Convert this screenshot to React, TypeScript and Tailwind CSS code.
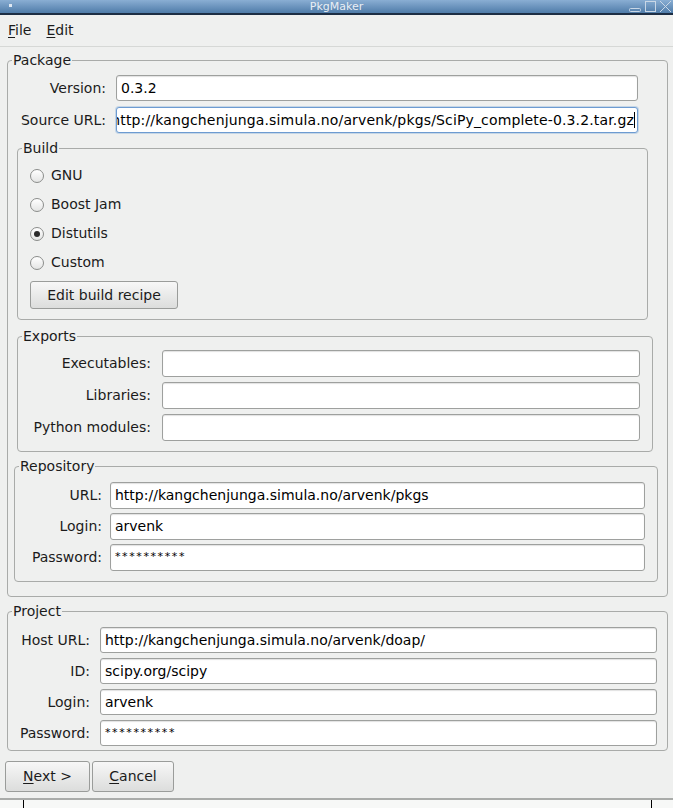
import React from "react";

type GroupProps = {
  title: string;
  className: string;
  bodyClassName: string;
  children: React.ReactNode;
};

function GroupBox({ title, className, bodyClassName, children }: GroupProps) {
  return (
    <fieldset className={`border border-[#a9aba9] rounded-[4px] ${className}`}>
      <legend className="ml-[4px] px-[1px] leading-[17px] text-[14px] text-[#1b1b1b]">
        {title}
      </legend>
      <div className={bodyClassName}>{children}</div>
    </fieldset>
  );
}

type RowProps = {
  label: string;
  value?: string;
  labelClass: string;
  inputClass: string;
  password?: boolean;
};

function Row({ label, value, labelClass, inputClass, password }: RowProps) {
  return (
    <div className="flex items-center">
      <span className={`text-right shrink-0 text-[14px] text-[#1b1b1b] ${labelClass}`}>
        {label}
      </span>
      <div
        className={`flex items-center bg-white border border-[#9ea09e] rounded-[3px] shadow-[inset_0_1px_1px_rgba(0,0,0,0.12)] px-[4px] overflow-hidden whitespace-nowrap ${inputClass}`}
      >
        {password ? (
          <span className="text-[11px] tracking-[1.6px] text-black">{value}</span>
        ) : (
          <span className="text-[14px] text-black">{value}</span>
        )}
      </div>
    </div>
  );
}

function Radio({ label, checked }: { label: string; checked?: boolean }) {
  return (
    <div className="h-[29px] flex items-center pl-[12px]">
      <span className="w-[14px] h-[14px] rounded-full border border-[#8b8d8b] bg-linear-to-b from-white to-[#e4e5e4] flex items-center justify-center">
        {checked && <span className="w-[6px] h-[6px] rounded-full bg-[#2a2a2a]" />}
      </span>
      <span className="ml-[7px] text-[14px] text-[#1b1b1b]">{label}</span>
    </div>
  );
}

function Button({ children, className }: { children: React.ReactNode; className: string }) {
  return (
    <button
      className={`flex items-center justify-center border border-[#9a9c9a] rounded-[3px] bg-linear-to-b from-[#f7f7f7] to-[#dcdddc] text-[14px] text-[#1b1b1b] ${className}`}
    >
      {children}
    </button>
  );
}

export default function App() {
  const pkgLabel = "w-[98px]";
  const pkgInput = "ml-[10px] w-[522px] h-[26px]";
  const expLabel = "w-[133px]";
  const expInput = "ml-[11px] w-[478px] h-[27px]";
  const repoLabel = "w-[87px]";
  const repoInput = "ml-[8px] w-[535px] h-[27px]";
  const projLabel = "w-[82px]";
  const projInput = "ml-[10px] w-[557px] h-[26px]";

  return (
    <div className="w-[673px] h-[808px] overflow-hidden bg-[#eff0ef] font-['DejaVu_Sans',sans-serif] flex flex-col">
      {/* title bar */}
      <div className="relative h-[15px] shrink-0 bg-linear-to-b from-[#8aaed3] to-[#4f7ca9] border-b-[2px] border-[#1d2e44] flex items-center justify-center">
        <span className="absolute left-[9px] top-[4px] w-[3px] h-[3px] bg-[#dfe8f2]" />
        <span className="text-[11px] leading-[13px] text-[#e9eef4]">PkgMaker</span>
        <svg className="absolute right-0 top-0" width="46" height="13" viewBox="0 0 46 13">
          <rect x="2.5" y="8.5" width="11" height="3" rx="1" fill="none" stroke="#c9d7e6" />
          <rect x="18.5" y="1.5" width="10" height="10" fill="none" stroke="#c9d7e6" />
          <path d="M33 1 L44 12 M44 1 L33 12" stroke="#c9d7e6" strokeWidth="1" />
        </svg>
      </div>

      {/* menu bar */}
      <div className="h-[32px] shrink-0 flex items-center pl-[8px] gap-[15px] text-[14px] text-[#1b1b1b] border-b border-[#d6d8d6]">
        <span>
          <span className="underline underline-offset-2">F</span>ile
        </span>
        <span>
          <span className="underline underline-offset-2">E</span>dit
        </span>
      </div>

      <div className="pl-[7px] pr-[6px] pt-[5px] flex flex-col">
        <GroupBox title="Package" className="w-[661px]" bodyClassName="pt-[6px] pb-[14px] flex flex-col">
          <div className="flex flex-col gap-[6px]">
            <Row label="Version:" value="0.3.2" labelClass={pkgLabel} inputClass={pkgInput} />
            <div className="flex items-center">
              <span className={`text-right shrink-0 text-[14px] text-[#1b1b1b] ${pkgLabel}`}>Source URL:</span>
              <div className="ml-[10px] w-[522px] h-[26px] flex items-center justify-end bg-white border border-[#6d9bd1] rounded-[3px] shadow-[0_0_0_1px_rgba(120,165,215,0.35)] pr-[2px] overflow-hidden whitespace-nowrap">
                <span className="text-[14px] tracking-[0.15px] text-black">
                  http://kangchenjunga.simula.no/arvenk/pkgs/SciPy_complete-0.3.2.tar.gz
                </span>
                <span className="w-[1px] h-[16px] bg-black shrink-0" />
              </div>
            </div>
          </div>

          <GroupBox title="Build" className="mt-[7px] ml-[9px] w-[631px]" bodyClassName="pt-[4px] pb-[10px] flex flex-col">
            <Radio label="GNU" />
            <Radio label="Boost Jam" />
            <Radio label="Distutils" checked />
            <Radio label="Custom" />
            <Button className="mt-[4px] ml-[12px] w-[148px] h-[28px]">Edit build recipe</Button>
          </GroupBox>

          <GroupBox title="Exports" className="mt-[8px] ml-[9px] w-[636px]" bodyClassName="pt-[5px] pb-[10px] flex flex-col gap-[5px]">
            <Row label="Executables:" labelClass={expLabel} inputClass={expInput} />
            <Row label="Libraries:" labelClass={expLabel} inputClass={expInput} />
            <Row label="Python modules:" labelClass={expLabel} inputClass={expInput} />
          </GroupBox>

          <GroupBox title="Repository" className="mt-[6px] ml-[6px] w-[644px]" bodyClassName="pt-[7px] pb-[10px] flex flex-col gap-[4px]">
            <Row label="URL:" value="http://kangchenjunga.simula.no/arvenk/pkgs" labelClass={repoLabel} inputClass={repoInput} />
            <Row label="Login:" value="arvenk" labelClass={repoLabel} inputClass={repoInput} />
            <Row label="Password:" value="**********" password labelClass={repoLabel} inputClass={repoInput} />
          </GroupBox>
        </GroupBox>

        <GroupBox title="Project" className="mt-[6px] w-[661px]" bodyClassName="pt-[7px] pb-[4px] flex flex-col gap-[5px]">
          <Row label="Host URL:" value="http://kangchenjunga.simula.no/arvenk/doap/" labelClass={projLabel} inputClass={projInput} />
          <Row label="ID:" value="scipy.org/scipy" labelClass={projLabel} inputClass={projInput} />
          <Row label="Login:" value="arvenk" labelClass={projLabel} inputClass={projInput} />
          <Row label="Password:" value="**********" password labelClass={projLabel} inputClass={projInput} />
        </GroupBox>

        <div className="mt-[10px] -ml-[2px] flex gap-[2px]">
          <Button className="w-[85px] h-[31px]">
            <span>
              <span className="underline underline-offset-2">N</span>ext &gt;
            </span>
          </Button>
          <Button className="w-[82px] h-[31px]">
            <span>
              <span className="underline underline-offset-2">C</span>ancel
            </span>
          </Button>
        </div>
      </div>

      {/* status strip */}
      <div className="mt-auto h-[10px] shrink-0 border-t-[2px] border-[#a9aba9] bg-[#f7f8f7] flex">
        <span className="ml-[23px] w-[1px] h-full bg-black" />
        <span className="ml-[627px] w-[1px] h-full bg-black" />
      </div>
    </div>
  );
}
